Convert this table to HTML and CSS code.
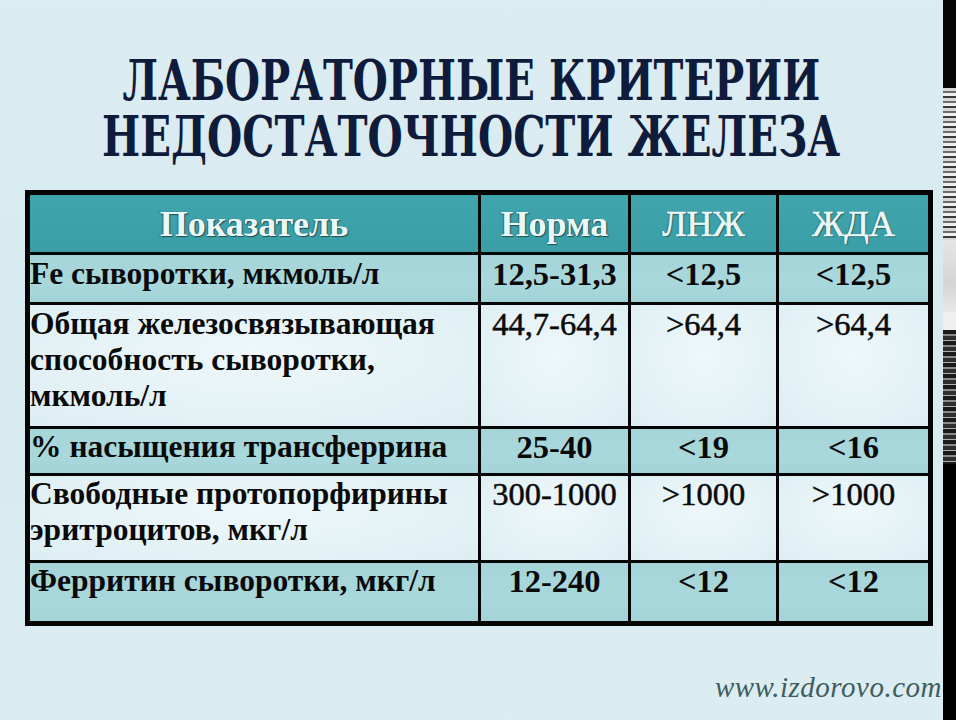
FILE: index.html
```html
<!DOCTYPE html>
<html>
<head>
<meta charset="utf-8">
<title>Лабораторные критерии недостаточности железа</title>
<link rel="stylesheet" href="styles.css">
</head>
<body>
<div class="screen">
  <div class="slide">
    <h1 class="title">
      <span class="line" data-width="698">ЛАБОРАТОРНЫЕ КРИТЕРИИ</span>
      <span class="line" data-width="738">НЕДОСТАТОЧНОСТИ ЖЕЛЕЗА</span>
    </h1>
    <table class="grid">
      <colgroup>
        <col class="c1"><col class="c2"><col class="c3"><col class="c4">
      </colgroup>
      <thead>
        <tr class="head">
          <th>Показатель</th><th>Норма</th><th class="thin">ЛНЖ</th><th class="thin">ЖДА</th>
        </tr>
      </thead>
      <tbody>
        <tr class="teal r1">
          <td class="name">Fe сыворотки, мкмоль/л</td><td class="val">12,5-31,3</td><td class="val">&lt;12,5</td><td class="val">&lt;12,5</td>
        </tr>
        <tr class="pale r2">
          <td class="name">Общая железосвязывающая способность сыворотки, <span class="nw">мкмоль/л</span></td><td class="val">44,7-64,4</td><td class="val">&gt;64,4</td><td class="val">&gt;64,4</td>
        </tr>
        <tr class="teal r3">
          <td class="name">% насыщения трансферрина</td><td class="val">25-40</td><td class="val">&lt;19</td><td class="val">&lt;16</td>
        </tr>
        <tr class="pale r4">
          <td class="name">Свободные протопорфирины эритроцитов, мкг/л</td><td class="val">300-1000</td><td class="val">&gt;1000</td><td class="val">&gt;1000</td>
        </tr>
        <tr class="teal r5">
          <td class="name">Ферритин сыворотки, мкг/л</td><td class="val">12-240</td><td class="val">&lt;12</td><td class="val">&lt;12</td>
        </tr>
      </tbody>
    </table>
    <div class="footer"><span class="site">www.izdorovo.com</span></div>
  </div>
  <div class="strip">
    <div class="s-top"></div>
    <div class="s-doc"></div>
    <div class="s-box"></div>
    <div class="s-gap"></div>
    <div class="s-dark"></div>
    <div class="s-black"></div>
  </div>
</div>
<script src="script.js"></script>
</body>
</html>
```

FILE: styles.css
```css
html, body {
  margin: 0;
  padding: 0;
}
body {
  width: 956px;
  height: 720px;
  overflow: hidden;
  background: #000;
  font-family: "Liberation Serif", serif;
}
.screen {
  display: flex;
  width: 956px;
  height: 720px;
}
.slide {
  width: 943px;
  height: 720px;
  flex: none;
  display: flex;
  flex-direction: column;
  background: linear-gradient(180deg, #dcedf2 0%, #d6eaf0 50%, #dcedf2 100%);
  font-family: "Liberation Serif", serif;
}
.title {
  margin: 52px 0 0 0;
  padding: 0;
  display: flex;
  flex-direction: column;
  align-items: center;
  font-family: "DejaVu Serif", "Liberation Serif", serif;
  font-size: 56px;
  line-height: 56px;
  font-weight: bold;
  color: #0f1b3b;
}
.title .line {
  display: block;
  white-space: nowrap;
  transform: scaleX(0.75);
}
.grid {
  margin: 26px 0 0 25px;
  width: 903px;
  border-collapse: collapse;
  table-layout: fixed;
  border: 5px solid #050505;
  font-family: "Liberation Serif", serif;
  font-weight: bold;
  font-size: 31.5px;
  line-height: 36px;
  color: #0a0a0a;
}
.c1 { width: 452px; }
.c2 { width: 150px; }
.c3 { width: 148px; }
.c4 { width: 153px; }
.grid th, .grid td {
  border: 3px solid #050505;
  padding: 0;
  text-align: center;
  vertical-align: top;
}
.head th {
  height: 57px;
  vertical-align: middle;
  background: linear-gradient(180deg, #3fa4ac 0%, #3a9ea7 100%);
  color: #eaf8f7;
  font-size: 36px;
  text-shadow: 1px 1px 1px #1d4e53, -1px 0 1px #2c6f74;
}
.head th.thin {
  font-weight: normal;
  -webkit-text-stroke: 0.6px #eaf8f7;
}
.teal td {
  background: linear-gradient(180deg, #a5d5d9 0%, #a9d8dc 60%, #a2d3d7 100%);
}
.pale td {
  background: radial-gradient(ellipse at 50% 40%, #eef7fa 0%, #e2f1f5 70%, #dcedf2 100%);
}
.grid td.name {
  text-align: left;
  padding-left: 0;
}
.grid td.val {
  font-size: 32.5px;
}
.nw {
  white-space: nowrap;
}
.pale td.val {
  font-weight: normal;
  -webkit-text-stroke: 0.5px #0a0a0a;
}
.r1 td { height: 46px; padding-top: 1px; }
.r2 td { height: 120px; padding-top: 1px; }
.r3 td { height: 44px; }
.r4 td { height: 84px; }
.r5 td { height: 58px; }
.footer {
  margin-top: auto;
  display: flex;
  justify-content: flex-end;
  padding: 0 1px 18px 0;
}
.site {
  font-family: "Liberation Serif", serif;
  font-style: italic;
  font-size: 29px;
  line-height: 30px;
  color: #3f5d5e;
  letter-spacing: 0.5px;
}
.strip {
  width: 13px;
  height: 720px;
  flex: none;
  display: flex;
  flex-direction: column;
  background: #000;
}
.s-top {
  height: 88px;
  background: #060606;
}
.s-doc {
  height: 152px;
  background: repeating-linear-gradient(180deg, #d8d8d8 0px, #d8d8d8 3px, #6c6c6c 3px, #6c6c6c 5px, #f0f0f0 5px, #f0f0f0 8px, #3a3a3a 8px, #3a3a3a 10px);
}
.s-box {
  height: 72px;
  background: linear-gradient(180deg, #e6e6e6 0%, #d4d4d4 60%, #e9e9e9 100%);
}
.s-gap {
  height: 18px;
  background: #efefef;
}
.s-dark {
  height: 134px;
  background: repeating-linear-gradient(180deg, #1a1a1a 0px, #1a1a1a 4px, #8a8a8a 4px, #8a8a8a 6px, #2e2e2e 6px, #2e2e2e 10px, #b0b0b0 10px, #b0b0b0 11px);
}
.s-black {
  flex: 1;
  background: #000;
}
```

FILE: script.js
```js
document.querySelectorAll('.title .line').forEach(function (el) {
  var target = parseFloat(el.getAttribute('data-width'));
  var natural = el.offsetWidth;
  if (target > 0 && natural > 0) {
    el.style.transform = 'scaleX(' + (target / natural).toFixed(4) + ')';
  }
});
```
